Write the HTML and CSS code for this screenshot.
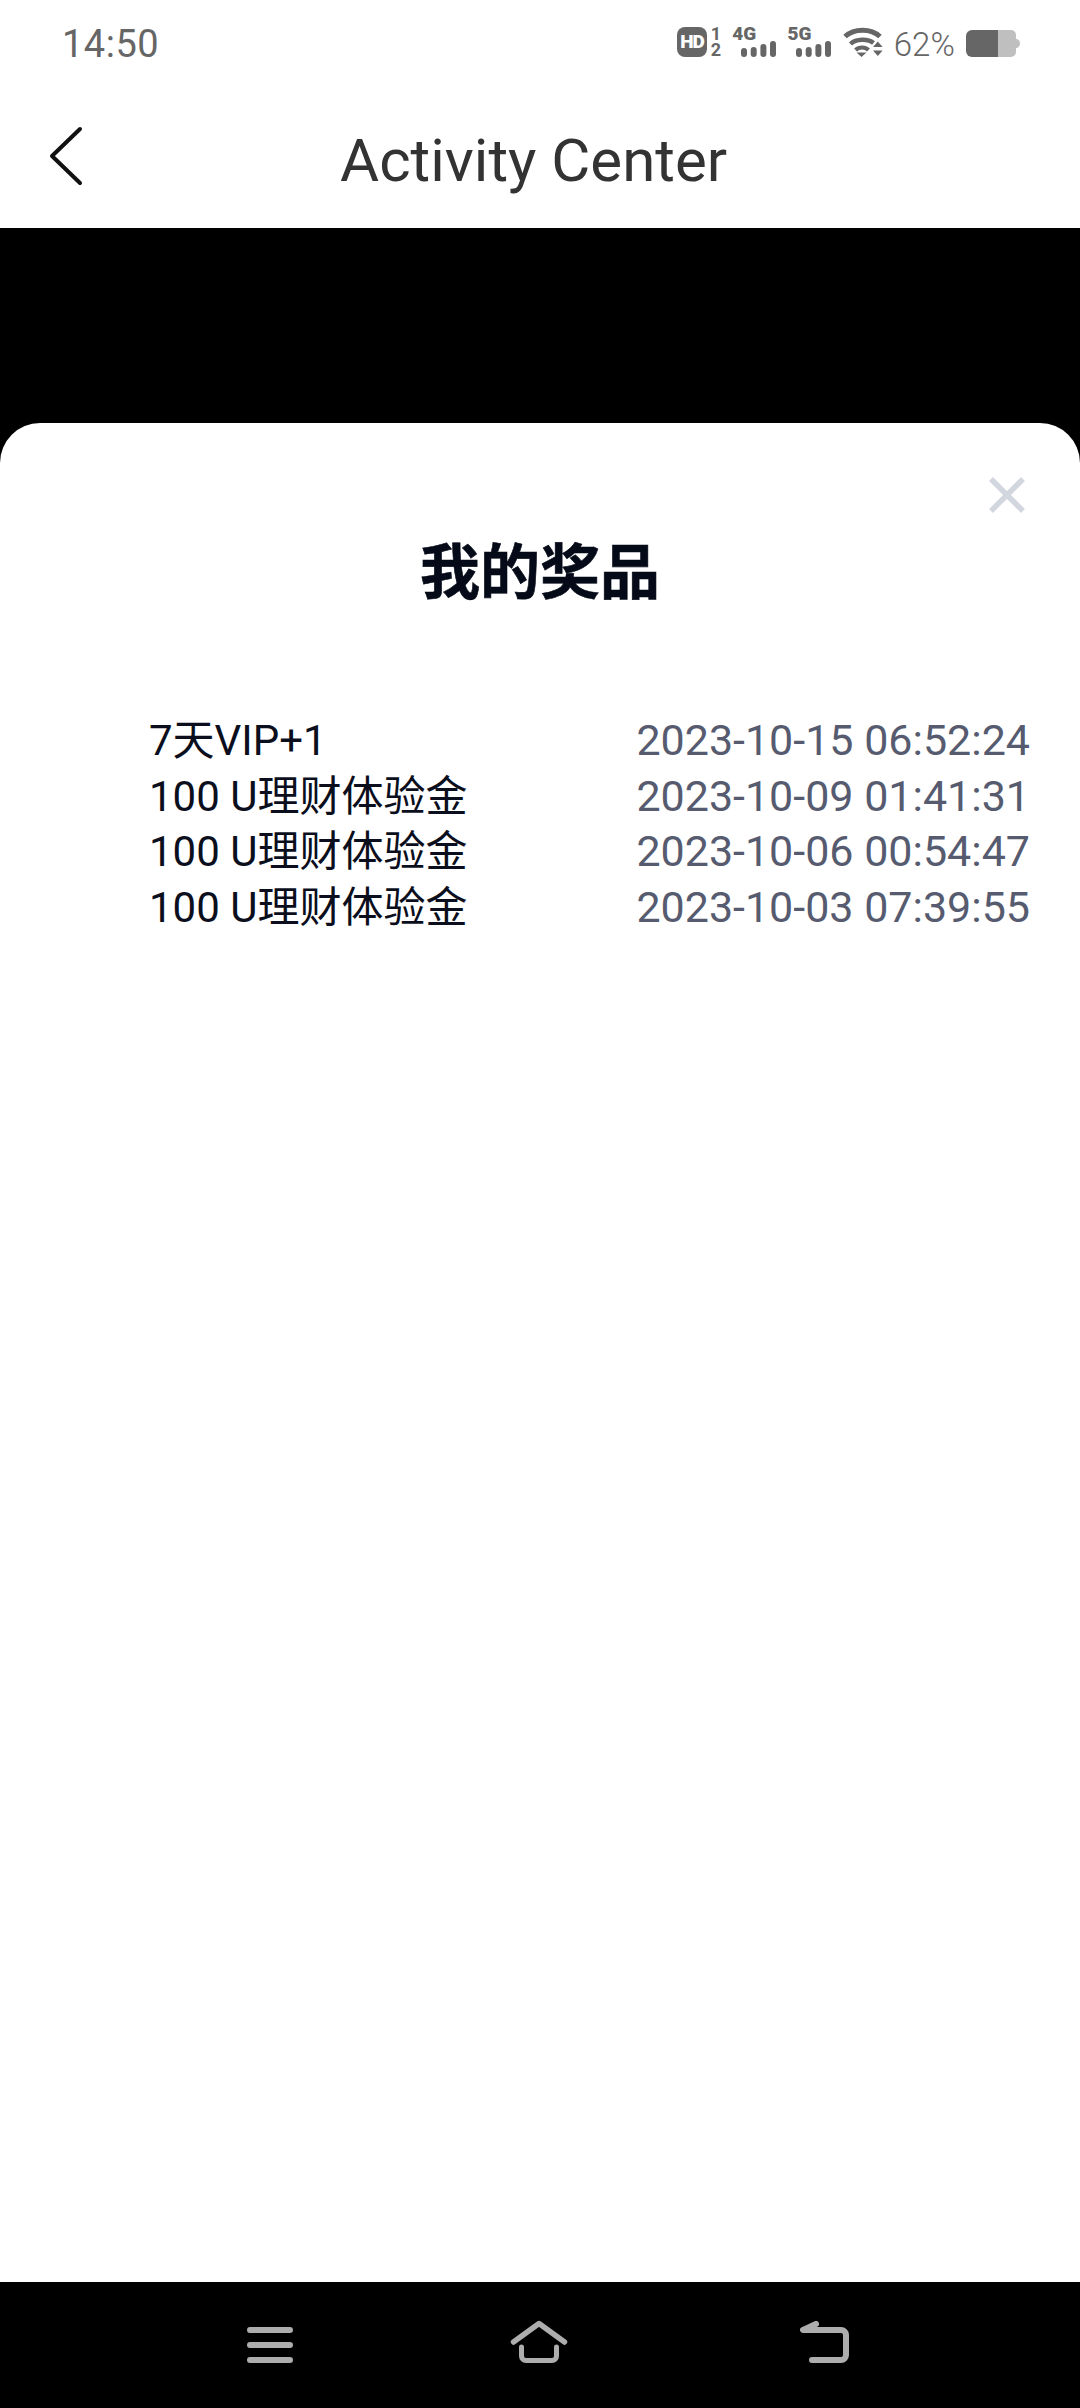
FILE: index.html
```html
<!DOCTYPE html>
<html lang="zh">
<head>
<meta charset="utf-8">
<title>Activity Center</title>
<link rel="stylesheet" href="styles.css">
</head>
<body>
<div class="phone">
  <header class="status">
    <span class="time">14:50</span>
    <div class="status-right">
      <div class="hd"><span class="hd-badge">HD</span><span class="hd-sims"><span>1</span><span>2</span></span></div>
      <div class="net"><span class="net-label">4G</span><svg width="35" height="16" viewBox="0 0 35 16"><rect x="0" y="7" width="6" height="9" rx="3" fill="#666"/><rect x="9.700" y="6" width="6" height="10" rx="3" fill="#666"/><rect x="19.400" y="3" width="6" height="13" rx="3" fill="#666"/><rect x="29" y="0" width="6" height="16" rx="3" fill="#666"/></svg></div>
      <div class="net"><span class="net-label">5G</span><svg width="35" height="16" viewBox="0 0 35 16"><rect x="0" y="7" width="6" height="9" rx="3" fill="#666"/><rect x="9.700" y="6" width="6" height="10" rx="3" fill="#666"/><rect x="19.400" y="3" width="6" height="13" rx="3" fill="#666"/><rect x="29" y="0" width="6" height="16" rx="3" fill="#666"/></svg></div>
      <svg class="ic-wifi" width="40" height="30" viewBox="0 0 40 30"><path d="M2 9.500C11 1 28 1 37 9.500" fill="none" stroke="#666" stroke-width="5"/><path d="M7.500 17C13 11.500 25 11.500 30.500 16" fill="none" stroke="#666" stroke-width="4.500"/><path d="M12.500 23C16 19.500 22 19.500 25.500 23" fill="none" stroke="#666" stroke-width="4"/><path d="M13.500 25.500h10l-5 4.500zM30 20l4.800-5.500 4.800 5.500zM30 23.500h9.600l-4.800 5.500z" fill="#666"/></svg>
      <span class="pct">62%</span>
      <svg class="ic-batt" width="54" height="27" viewBox="0 0 54 27"><path d="M6 0H32V27H6a6 6 0 0 1-6-6V6a6 6 0 0 1 6-6z" fill="#666"/><path d="M32 0H45a5 5 0 0 1 5 5V22a5 5 0 0 1-5 5H32z" fill="#bfbfbf"/><path d="M50 9a4 4.500 0 0 1 4 4.500a4 4.500 0 0 1-4 4.500z" fill="#bfbfbf"/></svg>
    </div>
  </header>
  <nav class="appbar">
    <svg class="back" width="36" height="60" viewBox="0 0 36 60"><path d="M33 3L5 30L33 57" fill="none" stroke="#111" stroke-width="4" stroke-linecap="round" stroke-linejoin="round"/></svg>
    <h1 class="page-title">Activity Center</h1>
  </nav>
  <main class="stage">
    <section class="sheet">
      <svg class="close" width="36" height="36" viewBox="0 0 36 36"><path d="M2 2L34 34M34 2L2 34" stroke="#d2d6df" stroke-width="5.500" fill="none"/></svg>
      <h2 class="sheet-title">我的奖品</h2>
      <ul class="prizes">
        <li class="prize"><span class="prize-name">7天VIP+1</span><span class="prize-date">2023-10-15 06:52:24</span></li>
        <li class="prize"><span class="prize-name">100 U理财体验金</span><span class="prize-date">2023-10-09 01:41:31</span></li>
        <li class="prize"><span class="prize-name">100 U理财体验金</span><span class="prize-date">2023-10-06 00:54:47</span></li>
        <li class="prize"><span class="prize-name">100 U理财体验金</span><span class="prize-date">2023-10-03 07:39:55</span></li>
      </ul>
    </section>
  </main>
  <footer class="navbar">
    <svg class="nav-menu" width="46" height="36" viewBox="0 0 46 36"><path d="M3 3h40M3 18h40M3 33h40" stroke="#adadad" stroke-width="6" stroke-linecap="round"/></svg>
    <svg class="nav-home" width="58" height="43" viewBox="0 0 58 43"><path d="M3.500 22L29 3.500L54.500 22" fill="none" stroke="#adadad" stroke-width="5.500" stroke-linecap="round" stroke-linejoin="round"/><path d="M11.500 27V36a4.500 4.500 0 0 0 4.500 4.500H42a4.500 4.500 0 0 0 4.500-4.500V27" fill="none" stroke="#adadad" stroke-width="5" stroke-linecap="round"/></svg>
    <svg class="nav-back" width="49" height="42" viewBox="0 0 49 42"><path d="M16 3L3 9H41a5 5 0 0 1 5 5V34a5 5 0 0 1-5 5H12" fill="none" stroke="#adadad" stroke-width="6" stroke-linecap="round" stroke-linejoin="round"/></svg>
  </footer>
</div>
</body>
</html>
```
FILE: styles.css
```css
* { box-sizing: border-box; margin: 0; padding: 0; }
html, body { width: 1080px; height: 2408px; background: #000; overflow: hidden; }
body { font-family: Roboto, "Noto Sans CJK SC", sans-serif; }
.phone { width: 1080px; height: 2408px; display: flex; flex-direction: column; }
.status { height: 88px; background: #fff; display: flex; align-items: flex-start; justify-content: space-between; padding: 27px 60px 0 62px; }
.time { font-size: 38px; line-height: 35px; color: #666; letter-spacing: 0.5px; }
.status-right { display: flex; align-items: flex-end; gap: 11.200px; height: 30px; }
.hd { display: flex; width: 44px; height: 30px; justify-content: space-between; color: #666; }
.hd-badge { width: 30px; height: 30px; border-radius: 8px; background: #666; color: #fff; font-size: 19px; font-weight: 900; letter-spacing: -1px; line-height: 30px; text-align: center; }
.hd-sims { display: flex; flex-direction: column; justify-content: space-between; width: 12px; font-size: 18px; font-weight: 700; line-height: 14px; text-align: right; }
.net { display: flex; flex-direction: column; width: 44px; height: 30px; }
.net-label { font-size: 19px; font-weight: 900; line-height: 14px; color: #666; }
.net svg { align-self: flex-end; }
.pct { font-size: 33px; line-height: 24px; font-weight: 300; color: #666; }
.appbar { height: 140px; background: #fff; display: flex; align-items: center; padding-left: 47px; position: relative; }
.back { position: relative; top: -2px; }
.page-title { position: absolute; left: 340px; top: 38px; font-size: 60px; line-height: 70px; font-weight: 400; color: #333; white-space: nowrap; }
.stage { flex: 1; background: #000; padding-top: 195px; display: flex; flex-direction: column; }
.sheet { flex: 1; background: #fff; border-radius: 40px 40px 0 0; position: relative; padding-top: 110px; }
.close { position: absolute; right: 55px; top: 54px; }
.sheet-title { font-family: "Noto Sans CJK SC", sans-serif; font-size: 60px; line-height: 70px; font-weight: 700; color: #050a18; text-align: center; -webkit-text-stroke: 0.6px #050a18; }
.prizes { list-style: none; margin-top: 110px; padding: 0 50px 0 149px; display: flex; flex-direction: column; }
.prize { height: 55.500px; line-height: 55.500px; display: flex; align-items: baseline; justify-content: space-between; }
.prize-name { font-size: 42px; color: #0b0e1c; font-weight: 400; }
.prize-date { font-size: 43px; color: #565b70; }
.navbar { height: 126px; background: #000; display: flex; align-items: flex-end; padding: 0 0 45px 247px; }
.nav-home { margin-left: 217px; }
.nav-back { margin-left: 232px; }
```
